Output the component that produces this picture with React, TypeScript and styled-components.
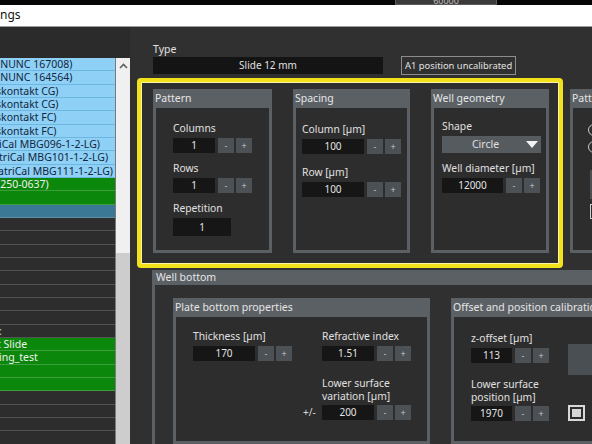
import React from "react";
import styled, { createGlobalStyle } from "styled-components";

const GlobalStyle = createGlobalStyle`
  html, body {
    margin: 0;
    padding: 0;
    background: #303030;
  }
  body {
    width: 592px;
    height: 444px;
    overflow: hidden;
    font-family: "Noto Sans", "Open Sans", sans-serif;
    font-size: 10px;
    color: #dcdcdc;
  }
`;

const Screen = styled.div`
  width: 592px;
  height: 444px;
  display: flex;
  flex-direction: column;
  overflow: hidden;
`;

const TopStrip = styled.div`
  height: 5px;
  flex: 0 0 5px;
  background: #060606;
  padding-left: 395px;
  display: flex;
`;

const StripBox = styled.div`
  width: 102px;
  height: 5px;
  background: #3b3b3b;
  border: 1px solid #5a5a5a;
  border-top: none;
  box-sizing: border-box;
  font-size: 9px;
  line-height: 1px;
  color: #bdbdbd;
  text-align: center;
  overflow: hidden;
`;

const TitleBar = styled.div`
  height: 21px;
  flex: 0 0 21px;
  background: #ffffff;
  border-bottom: 1px solid #9c9c9c;
  color: #111;
  font-size: 12px;
  line-height: 20px;
`;

const Body = styled.div`
  flex: 1;
  display: flex;
  min-height: 0;
`;

const LeftPanel = styled.div`
  width: 130px;
  flex: 0 0 130px;
  background: #2b2b2b;
  padding-top: 31px;
  display: flex;
  box-sizing: border-box;
`;

const List = styled.div`
  width: 115px;
  display: flex;
  flex-direction: column;
  overflow: hidden;
  border-right: 1px solid #7a7a7a;
`;

type RowKind = "blue" | "green" | "selected" | "dark";

const rowBg: Record<RowKind, string> = {
  blue: "#8ed0f6",
  green: "#0b870b",
  selected: "#3b7896",
  dark: "#2d2d2d",
};
const rowLine: Record<RowKind, string> = {
  blue: "#6cb6df",
  green: "#3c9e3c",
  selected: "#5d8ea6",
  dark: "#525252",
};
const rowText: Record<RowKind, string> = {
  blue: "#12273d",
  green: "#f0f0f0",
  selected: "#ffffff",
  dark: "#d0d0d0",
};

const ListRow = styled.div<{ $kind: RowKind }>`
  height: 13.33px;
  flex: 0 0 13.33px;
  box-sizing: border-box;
  background: ${(p) => rowBg[p.$kind]};
  border-bottom: 1px solid ${(p) => rowLine[p.$kind]};
  color: ${(p) => rowText[p.$kind]};
  font-size: 10.5px;
  line-height: 12px;
  white-space: nowrap;
  overflow: hidden;
`;

const RowText = styled.span<{ $shift: number }>`
  display: inline-block;
  margin-left: ${(p) => p.$shift}px;
`;

const Scrollbar = styled.div`
  width: 14px;
  display: flex;
  flex-direction: column;
  background: #f0f0f0;
`;

const ScrollArrow = styled.div`
  height: 15px;
  display: flex;
  align-items: center;
  justify-content: center;
`;

const ScrollTrack = styled.div`
  height: 180px;
`;

const ScrollThumb = styled.div`
  flex: 1;
  background: #cdcdcd;
`;

const Main = styled.div`
  flex: 1;
  min-width: 0;
  display: flex;
  flex-direction: column;
  padding-left: 7px;
  overflow: hidden;
`;

const TypeSection = styled.div`
  margin: 15px 0 0 16px;
`;

const TypeLabel = styled.div`
  font-size: 10.5px;
  line-height: 14px;
  color: #e2e2e2;
`;

const TypeRow = styled.div`
  display: flex;
  align-items: center;
  gap: 18px;
`;

const TypeField = styled.div`
  width: 230px;
  height: 17px;
  background: #141414;
  color: #e0e0e0;
  text-align: center;
  line-height: 17px;
`;

const StatusBox = styled.div`
  width: 115px;
  height: 19px;
  box-sizing: border-box;
  border: 1px solid #8c8c8c;
  padding: 0 3px;
  font-size: 9.4px;
  line-height: 17px;
  color: #e0e0e0;
  white-space: nowrap;
  overflow: hidden;
`;

const FrameRow = styled.div`
  display: flex;
  align-items: flex-start;
  gap: 7px;
  margin-top: 3px;
`;

const YellowFrame = styled.div`
  flex: 0 0 auto;
  width: 426px;
  height: 190px;
  box-sizing: border-box;
  border: 4px solid #f2e21c;
  border-radius: 4px;
  box-shadow: inset 0 0 0 1px #fbf3a8;
  background: #2e2e2e;
  padding: 7px 10px 11px 12px;
  display: flex;
  gap: 21px;
`;

const Group = styled.div<{ $w: number; $h: number; $top?: number }>`
  flex: 0 0 ${(p) => p.$w}px;
  width: ${(p) => p.$w}px;
  height: ${(p) => p.$h}px;
  margin-top: ${(p) => p.$top ?? 0}px;
  box-sizing: border-box;
  border: 3px solid #5b6065;
  border-top: none;
  background: #2d2d2d;
  display: flex;
  flex-direction: column;
`;

const GroupHeader = styled.div`
  height: 19px;
  flex: 0 0 19px;
  background: #5b6065;
  color: #e6e6e6;
  font-size: 10.5px;
  line-height: 19px;
  padding-left: 2px;
  margin: 0 -3px;
  white-space: nowrap;
  overflow: hidden;
`;

const GroupBody = styled.div<{ $pl: number; $pt: number; $gap?: number }>`
  padding: ${(p) => p.$pt}px 0 0 ${(p) => p.$pl}px;
  display: flex;
  flex-direction: column;
  gap: ${(p) => p.$gap ?? 9}px;
`;

const Field = styled.div`
  display: flex;
  flex-direction: column;
  gap: 2px;
`;

const Label = styled.div`
  font-size: 10.3px;
  line-height: 15px;
  color: #e0e0e0;
  white-space: nowrap;
`;

const TwoLineLabel = styled(Label)`
  line-height: 13px;
`;

const Controls = styled.div`
  display: flex;
  align-items: center;
  gap: 2px;
`;

const ValueBox = styled.div<{ $w: number; $h?: number }>`
  width: ${(p) => p.$w}px;
  height: ${(p) => p.$h ?? 15}px;
  line-height: ${(p) => p.$h ?? 15}px;
  background: #161616;
  color: #e4e4e4;
  font-size: 10px;
  text-align: center;
  margin-right: 1px;
`;

const StepButton = styled.div`
  width: 16px;
  height: 15px;
  background: #4c5155;
  color: #c6c6c6;
  font-size: 9px;
  line-height: 15px;
  text-align: center;
`;

const Dropdown = styled.div`
  width: 99px;
  height: 17px;
  background: #565b5f;
  display: flex;
  align-items: center;
`;

const DropdownText = styled.div`
  flex: 1;
  text-align: center;
  color: #e0e0e0;
  font-size: 10.5px;
  line-height: 17px;
  padding-left: 6px;
`;

const DropdownArrow = styled.div`
  width: 18px;
  display: flex;
  justify-content: center;
`;

const Radio = styled.div`
  width: 10px;
  height: 10px;
  border: 1.5px solid #c8c8c8;
  border-radius: 50%;
`;

const GrayBlock = styled.div<{ $w: number; $h: number }>`
  width: ${(p) => p.$w}px;
  height: ${(p) => p.$h}px;
  background: #4a4f53;
`;

const CheckOutline = styled.div`
  width: 13px;
  height: 13px;
  border: 1.5px solid #cfcfcf;
`;

const WellBottom = styled.div`
  margin: 2px 0 0 15px;
  border-left: 3px solid #5b6065;
  flex: 1;
  display: flex;
  flex-direction: column;
`;

const WellHeader = styled.div`
  height: 15px;
  flex: 0 0 15px;
  background: #5b6065;
  color: #e6e6e6;
  font-size: 10.5px;
  line-height: 14px;
  margin-left: -3px;
  padding-left: 4px;
`;

const WellBody = styled.div`
  padding: 13px 0 0 18px;
  display: flex;
  gap: 21px;
`;

const PlateGrid = styled.div`
  display: grid;
  grid-template-columns: 110px 19px auto;
  row-gap: 16px;
  padding: 12px 0 0 17px;
`;

const PlusMinus = styled.div`
  align-self: end;
  line-height: 15px;
  color: #d8d8d8;
`;

const OffsetGrid = styled.div`
  display: grid;
  grid-template-columns: 97px auto;
  row-gap: 15px;
  padding: 14px 0 0 17px;
`;

const CheckBig = styled.div`
  align-self: end;
  width: 17px;
  height: 16px;
  box-sizing: border-box;
  border: 2px solid #d8d8d8;
  padding: 2px;
`;

const CheckFill = styled.div`
  width: 100%;
  height: 100%;
  background: #d6d6d6;
`;

const rows: { kind: RowKind; text?: string; shift?: number }[] = [
  { kind: "blue", text: "(NUNC 167008)", shift: -3 },
  { kind: "blue", text: "(NUNC 164564)", shift: -3 },
  { kind: "blue", text: "skontakt CG)", shift: -4 },
  { kind: "blue", text: "skontakt CG)", shift: -4 },
  { kind: "blue", text: "skontakt FC)", shift: -4 },
  { kind: "blue", text: "skontakt FC)", shift: -4 },
  { kind: "blue", text: "iCal MBG096-1-2-LG)", shift: -1 },
  { kind: "blue", text: "triCal MBG101-1-2-LG)", shift: -1 },
  { kind: "blue", text: "atriCal MBG111-1-2-LG)", shift: -2 },
  { kind: "green", text: "(250-0637)", shift: -3 },
  { kind: "green" },
  { kind: "selected" },
  { kind: "dark" },
  { kind: "dark" },
  { kind: "dark" },
  { kind: "dark" },
  { kind: "dark" },
  { kind: "dark" },
  { kind: "dark" },
  { kind: "dark" },
  { kind: "dark", text: ":", shift: -1 },
  { kind: "green", text: "t Slide", shift: -3 },
  { kind: "green", text: "ing_test", shift: -1 },
  { kind: "green" },
  { kind: "green" },
  { kind: "dark" },
  { kind: "dark" },
  { kind: "dark" },
  { kind: "dark" },
];

const Stepper = ({ value, w, h }: { value: string; w: number; h?: number }) => (
  <Controls>
    <ValueBox $w={w} $h={h}>{value}</ValueBox>
    <StepButton>-</StepButton>
    <StepButton>+</StepButton>
  </Controls>
);

export default function App() {
  return (
    <Screen>
      <GlobalStyle />
      <TopStrip>
        <StripBox>60000</StripBox>
      </TopStrip>
      <TitleBar>ngs</TitleBar>
      <Body>
        <LeftPanel>
          <List>
            {rows.map((r, i) => (
              <ListRow key={i} $kind={r.kind}>
                {r.text && <RowText $shift={r.shift ?? 0}>{r.text}</RowText>}
              </ListRow>
            ))}
          </List>
          <Scrollbar>
            <ScrollArrow>
              <svg width="9" height="6" viewBox="0 0 9 6">
                <path d="M1 5 L4.5 1.5 L8 5" fill="none" stroke="#606060" strokeWidth="1.6" />
              </svg>
            </ScrollArrow>
            <ScrollTrack />
            <ScrollThumb />
          </Scrollbar>
        </LeftPanel>
        <Main>
          <TypeSection>
            <TypeLabel>Type</TypeLabel>
            <TypeRow>
              <TypeField>Slide 12 mm</TypeField>
              <StatusBox>A1 position uncalibrated</StatusBox>
            </TypeRow>
          </TypeSection>

          <FrameRow>
            <YellowFrame>
              <Group $w={119} $h={164}>
                <GroupHeader>Pattern</GroupHeader>
                <GroupBody $pl={17} $pt={13} $gap={8}>
                  <Field>
                    <Label>Columns</Label>
                    <Stepper value="1" w={42} />
                  </Field>
                  <Field>
                    <Label>Rows</Label>
                    <Stepper value="1" w={42} />
                  </Field>
                  <Field>
                    <Label>Repetition</Label>
                    <ValueBox $w={58} $h={18}>1</ValueBox>
                  </Field>
                </GroupBody>
              </Group>

              <Group $w={117} $h={164}>
                <GroupHeader>Spacing</GroupHeader>
                <GroupBody $pl={6} $pt={14} $gap={11}>
                  <Field>
                    <Label>Column [µm]</Label>
                    <Stepper value="100" w={62} />
                  </Field>
                  <Field>
                    <Label>Row [µm]</Label>
                    <Stepper value="100" w={62} />
                  </Field>
                </GroupBody>
              </Group>

              <Group $w={118} $h={164}>
                <GroupHeader>Well geometry</GroupHeader>
                <GroupBody $pl={8} $pt={11} $gap={8}>
                  <Field>
                    <Label>Shape</Label>
                    <Dropdown>
                      <DropdownText>Circle</DropdownText>
                      <DropdownArrow>
                        <svg width="12" height="7" viewBox="0 0 12 7">
                          <path d="M0 0 H12 L6 7 Z" fill="#f2f2f2" />
                        </svg>
                      </DropdownArrow>
                    </Dropdown>
                  </Field>
                  <Field>
                    <Label>Well diameter [µm]</Label>
                    <Stepper value="12000" w={61} />
                  </Field>
                </GroupBody>
              </Group>
            </YellowFrame>

            <Group $w={100} $h={164} $top={11}>
              <GroupHeader>Pattern</GroupHeader>
              <GroupBody $pl={15} $pt={16} $gap={5}>
                <Radio />
                <Radio />
                <GrayBlock $w={60} $h={29} style={{ marginTop: 12, marginLeft: 2 }} />
                <CheckOutline style={{ marginLeft: 2 }} />
              </GroupBody>
            </Group>
          </FrameRow>

          <WellBottom>
            <WellHeader>Well bottom</WellHeader>
            <WellBody>
              <Group $w={257} $h={146}>
                <GroupHeader>Plate bottom properties</GroupHeader>
                <PlateGrid>
                  <Field>
                    <Label>Thickness [µm]</Label>
                    <Stepper value="170" w={62} />
                  </Field>
                  <div />
                  <Field>
                    <Label>Refractive index</Label>
                    <Stepper value="1.51" w={52} />
                  </Field>
                  <div />
                  <PlusMinus>+/-</PlusMinus>
                  <Field>
                    <TwoLineLabel>
                      Lower surface
                      <br />
                      variation [µm]
                    </TwoLineLabel>
                    <Stepper value="200" w={52} />
                  </Field>
                </PlateGrid>
              </Group>

              <Group $w={200} $h={146}>
                <GroupHeader>Offset and position calibration</GroupHeader>
                <OffsetGrid>
                  <Field>
                    <Label>z-offset [µm]</Label>
                    <Stepper value="113" w={41} />
                  </Field>
                  <GrayBlock $w={40} $h={31} style={{ alignSelf: "end", marginBottom: -12 }} />
                  <Field>
                    <TwoLineLabel>
                      Lower surface
                      <br />
                      position [µm]
                    </TwoLineLabel>
                    <Stepper value="1970" w={41} />
                  </Field>
                  <CheckBig>
                    <CheckFill />
                  </CheckBig>
                </OffsetGrid>
              </Group>
            </WellBody>
          </WellBottom>
        </Main>
      </Body>
    </Screen>
  );
}
